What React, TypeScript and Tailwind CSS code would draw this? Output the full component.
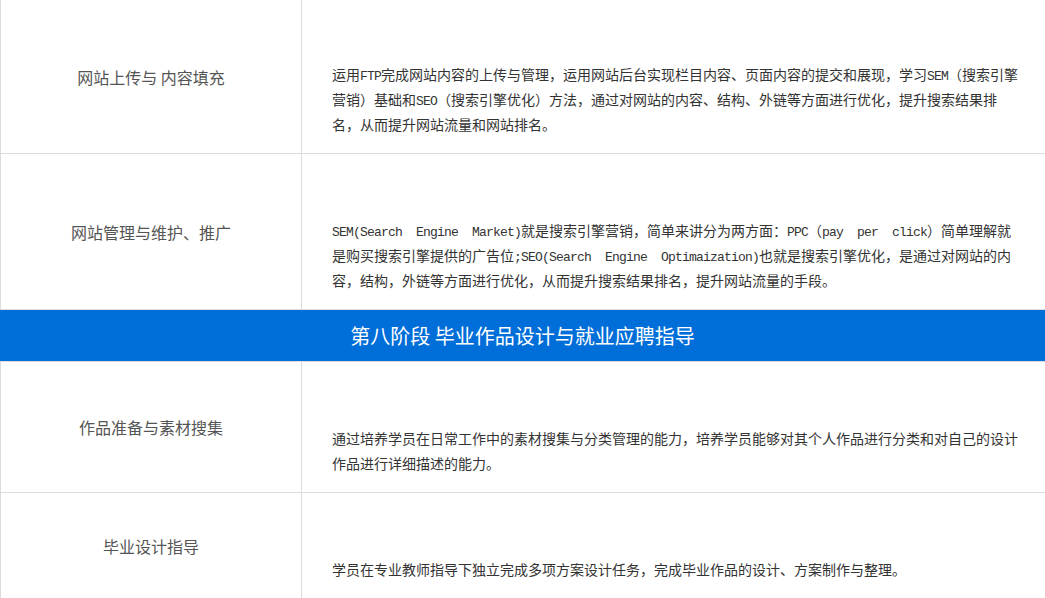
import React from "react";

const M = ({ children }: { children: React.ReactNode }) => (
  <span className="font-['Liberation_Mono',monospace] text-[13px] tracking-[-0.8px] whitespace-pre">
    {children}
  </span>
);

const cjk = "font-['Noto_Sans_CJK_SC',sans-serif]";

function Row({
  label,
  lines,
  pt = "pt-4",
}: {
  label: string;
  lines: React.ReactNode[];
  pt?: string;
}) {
  return (
    <div className="flex border-b border-[#dcdcdc]">
      <div className="w-[302px] shrink-0 border-l border-r border-[#dcdcdc] flex items-center justify-center">
        <span className={`${cjk} text-[16px] text-[#555] whitespace-pre`}>{label}</span>
      </div>
      <div className={`flex-1 pl-[30px] ${pt} pb-4`}>
        <div className={`pt-12 ${cjk} text-[14px] leading-[25px] text-[#333]`}>
          {lines.map((l, i) => (
            <div key={i} className="whitespace-nowrap h-[25px]">
              {l}
            </div>
          ))}
        </div>
      </div>
    </div>
  );
}

export default function App() {
  return (
    <div className="w-[1045px] h-[598px] overflow-hidden bg-white">
      <Row
        label="网站上传与 内容填充"
        pt="pt-[14px]"
        lines={[
          <>
            运用<M>FTP</M>完成网站内容的上传与管理，运用网站后台实现栏目内容、页面内容的提交和展现，学习<M>SEM</M>（搜索引擎
          </>,
          <>
            营销）基础和<M>SEO</M>（搜索引擎优化）方法，通过对网站的内容、结构、外链等方面进行优化，提升搜索结果排
          </>,
          <>名，从而提升网站流量和网站排名。</>,
        ]}
      />
      <Row
        label="网站管理与维护、推广"
        lines={[
          <>
            <M>{"SEM(Search  Engine  Market)"}</M>就是搜索引擎营销，简单来讲分为两方面：<M>PPC</M>（<M>{"pay  per  click"}</M>）简单理解就
          </>,
          <>
            是购买搜索引擎提供的广告位<M>{";SEO(Search  Engine  Optimaization)"}</M>也就是搜索引擎优化，是通过对网站的内
          </>,
          <>容，结构，外链等方面进行优化，从而提升搜索结果排名，提升网站流量的手段。</>,
        ]}
      />
      <div className="h-[52px] bg-[#006ed9] border-b border-[#dcdcdc] flex items-center justify-center">
        <span className={`${cjk} text-[20px] text-white whitespace-pre`}>
          第八阶段 毕业作品设计与就业应聘指导
        </span>
      </div>
      <Row
        label="作品准备与素材搜集"
        lines={[
          <>通过培养学员在日常工作中的素材搜集与分类管理的能力，培养学员能够对其个人作品进行分类和对自己的设计</>,
          <>作品进行详细描述的能力。</>,
        ]}
      />
      <Row
        label="毕业设计指导"
        lines={[<>学员在专业教师指导下独立完成多项方案设计任务，完成毕业作品的设计、方案制作与整理。</>]}
      />
    </div>
  );
}
